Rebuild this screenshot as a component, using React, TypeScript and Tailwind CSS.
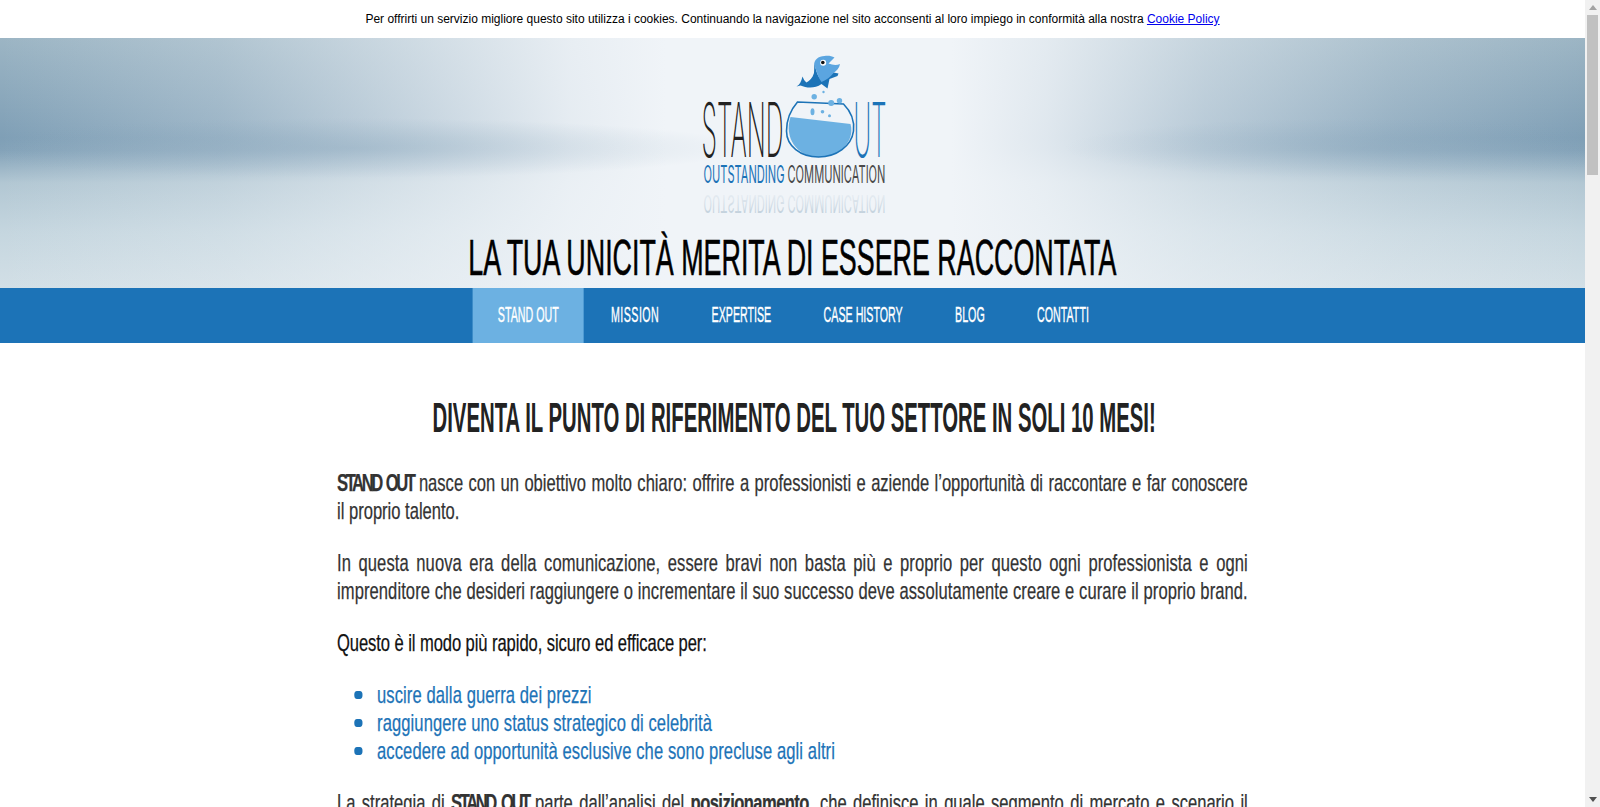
const navItems = ["STAND OUT", "MISSION", "EXPERTISE", "CASE HISTORY", "BLOG", "CONTATTI"];
const bullets = [
  "uscire dalla guerra dei prezzi",
  "raggiungere uno status strategico di celebrità",
  "accedere ad opportunità esclusive che sono precluse agli altri",
];

function Logo() {
  return (
    <svg viewBox="622.5 40 340 190" className="w-[340px] h-[190px] mt-[2px] shrink-0">
      <defs>
        <linearGradient id="fade" x1="0" y1="0" x2="0" y2="1">
          <stop offset="0" stopColor="#8fa9bd" stopOpacity="0.55" />
          <stop offset="1" stopColor="#8fa9bd" stopOpacity="0" />
        </linearGradient>
      </defs>
      <text x="701" y="157" fontFamily="Inter" fontWeight="250" fontSize="75" textLength="82" lengthAdjust="spacingAndGlyphs" fill="#222">STAND</text>
      <text x="853" y="157" fontFamily="Inter" fontWeight="250" fontSize="75" textLength="33" lengthAdjust="spacingAndGlyphs" fill="#1c73b7">UT</text>
      <path d="M790 117 L850 124 C855 142 838 157 818 157 C797 157 783 138 790 117Z" fill="#6cb1e2" />
      <path d="M797 102 L843 104 C851 112 854 122 853 131 C851 146 836 157 818 157 C800 157 786 146 786 131 C786 120 790 110 797 102Z" fill="none" stroke="#1c73b7" strokeWidth="1.6" />
      <circle cx="813.700" cy="96.700" r="2.700" fill="#6cb1e2" />
      <circle cx="823" cy="92" r="1.200" fill="#6cb1e2" />
      <circle cx="830.700" cy="103" r="3" fill="#6cb1e2" />
      <circle cx="839" cy="100.700" r="2.700" fill="#6cb1e2" />
      <ellipse cx="812" cy="111.700" rx="2" ry="3.500" fill="#6cb1e2" />
      <circle cx="822" cy="111.700" r="1.800" fill="#6cb1e2" />
      <circle cx="829" cy="115.700" r="1.500" fill="#6cb1e2" />
      <path d="M796 86.500 C799 85 801 81 802 76.500 C803 79 804 81 806 82.500 C809 81 812 78 813.500 73 L814 62 C815 70 817 76 821 80 L833 72.500 L838 73.500 L837 76 L829 79 L827 88.500 L821 84 C814 89 806 88 800 85.500Z" fill="#1c73b7" />
      <path d="M814 65 C813 60 818 56 824 56 C828 55.500 831 56 834 57.500 L828 63.500 C832 65 836 65.500 839.500 64 C839 68 836 71 833 73 C830 77 826 80 821 82 C818 78 816 72 814 65Z" fill="#5ba5e0" />
      <circle cx="822.700" cy="62.700" r="3" fill="#fff" />
      <circle cx="822.300" cy="62.500" r="1.800" fill="#111" />
      <text x="703" y="183" fontFamily="Inter" fontSize="24" textLength="81" lengthAdjust="spacingAndGlyphs" fill="#1c73b7">OUTSTANDING</text>
      <text x="787" y="183" fontFamily="Inter" fontSize="24" textLength="98" lengthAdjust="spacingAndGlyphs" fill="#4a4a4a">COMMUNICATION</text>
      <g transform="translate(0 378) scale(1 -1)">
        <text x="703" y="183" fontFamily="Inter" fontSize="24" textLength="81" lengthAdjust="spacingAndGlyphs" fill="url(#fade)">OUTSTANDING</text>
        <text x="787" y="183" fontFamily="Inter" fontSize="24" textLength="98" lengthAdjust="spacingAndGlyphs" fill="url(#fade)">COMMUNICATION</text>
      </g>
    </svg>
  );
}

function Scrollbar() {
  return (
    <div className="w-[15px] shrink-0 bg-[#f1f1f1] flex flex-col items-center">
      <div className="h-[15px] flex items-center justify-center">
        <svg width="8" height="5" viewBox="0 0 8 5"><path d="M4 0L8 5H0Z" fill="#a3a3a3" /></svg>
      </div>
      <div className="w-[11px] h-[160px] bg-[#c1c1c1]" />
      <div className="flex-1" />
      <div className="h-[15px] flex items-center justify-center">
        <svg width="8" height="5" viewBox="0 0 8 5"><path d="M0 0H8L4 5Z" fill="#505050" /></svg>
      </div>
    </div>
  );
}

export default function App() {
  return (
    <div className="h-[807px] flex overflow-hidden bg-white font-['Liberation_Sans',Arial,sans-serif]">
      <div className="flex-1 min-w-0 overflow-hidden">
        <div className="h-[38px] flex items-center justify-center text-[12px] text-black">
          <span>
            Per offrirti un servizio migliore questo sito utilizza i cookies. Continuando la navigazione nel sito acconsenti al loro impiego in conformità alla nostra{" "}
            <a className="text-[#0000ee] underline">Cookie Policy</a>
          </span>
        </div>
        <header className="h-[250px] flex flex-col items-center bg-[radial-gradient(ellipse_400px_30px_at_22%_44%,rgba(127,159,182,0.35),rgba(127,159,182,0)),radial-gradient(ellipse_300px_30px_at_86%_44%,rgba(127,159,182,0.25),rgba(127,159,182,0)),linear-gradient(90deg,rgba(240,244,248,0)_0%,rgba(240,244,248,0.25)_14%,rgba(240,244,248,0.6)_26%,rgba(240,244,248,0.9)_36%,#f0f4f8_42%,#f0f4f8_60%,rgba(240,244,248,0.85)_66%,rgba(240,244,248,0.5)_76%,rgba(240,244,248,0.2)_88%,rgba(240,244,248,0)_100%),linear-gradient(180deg,#9cb5c4_0%,#7f9fb6_40%,#84a3b9_45%,#b2c7d3_58%,#c5d6df_78%,#d2dfe6_100%)]">
          <Logo />
          <h1 className="text-[50px] leading-[56px] whitespace-nowrap text-black scale-x-[0.537] [-webkit-text-stroke:0.6px_#000]">
            LA TUA UNICITÀ MERITA DI ESSERE RACCONTATA
          </h1>
        </header>
        <nav className="h-[55px] pl-[1px] bg-[#1c73b7] flex justify-center text-[22px] text-white [-webkit-text-stroke:0.4px_#fff]">
          <div className="flex shrink-0 gap-[4px] scale-x-[0.485]">
            {navItems.map((item, i) => (
              <a
                key={item}
                className={`px-[52px] pb-[2px] flex items-center ${i === 0 ? "bg-[#6cb1e2]" : ""} ${i === 1 ? "tracking-[0.9px]" : ""}`}
              >
                {item}
              </a>
            ))}
          </div>
        </nav>
        <main className="w-[911px] mx-auto pt-[53px]">
          <div className="flex justify-center pl-[3px]">
            <h2 className="shrink-0 text-[42px] leading-[44px] font-bold text-[#222] whitespace-nowrap scale-x-[0.484]">
              DIVENTA IL PUNTO DI RIFERIMENTO DEL TUO SETTORE IN SOLI 10 MESI!
            </h2>
          </div>
          <div className="w-[1320px] origin-left scale-x-[0.69] text-[24px] leading-[28px] text-[#333] [-webkit-text-stroke:0.25px]">
            <p className="mt-[29px]">
              <span className="block whitespace-nowrap [text-align-last:justify]">
                <strong className="tracking-[-3.5px] [word-spacing:3px]">STAND OUT</strong> nasce con un obiettivo molto chiaro: offrire a professionisti e aziende l’opportunità di raccontare e far conoscere
              </span>
              <span className="block">il proprio talento.</span>
            </p>
            <p className="mt-[24px] tracking-[0.12px]">
              <span className="block whitespace-nowrap [text-align-last:justify]">
                In questa nuova era della comunicazione, essere bravi non basta più e proprio per questo ogni professionista e ogni
              </span>
              <span className="block whitespace-nowrap [text-align-last:justify]">
                imprenditore che desideri raggiungere o incrementare il suo successo deve assolutamente creare e curare il proprio brand.
              </span>
            </p>
            <p className="mt-[24px] text-[#111] tracking-[-0.1px]">Questo è il modo più rapido, sicuro ed efficace per:</p>
            <ul className="mt-[24px] pl-[58px] text-[#1c73b7] tracking-[0.14px]">
              {bullets.map((b) => (
                <li
                  key={b}
                  className="relative before:absolute before:left-[-33px] before:top-[10px] before:w-[12px] before:h-[8px] before:rounded-full before:bg-[#1c73b7] before:content-['']"
                >
                  {b}
                </li>
              ))}
            </ul>
            <p className="mt-[24px] text-justify [text-align-last:justify]">
              La strategia di <strong className="tracking-[-3.5px] [word-spacing:3px]">STAND OUT</strong> parte dall’analisi del <strong className="tracking-[-0.8px]">posizionamento</strong>, che definisce in quale segmento di mercato e scenario il
            </p>
          </div>
        </main>
      </div>
      <Scrollbar />
    </div>
  );
}
